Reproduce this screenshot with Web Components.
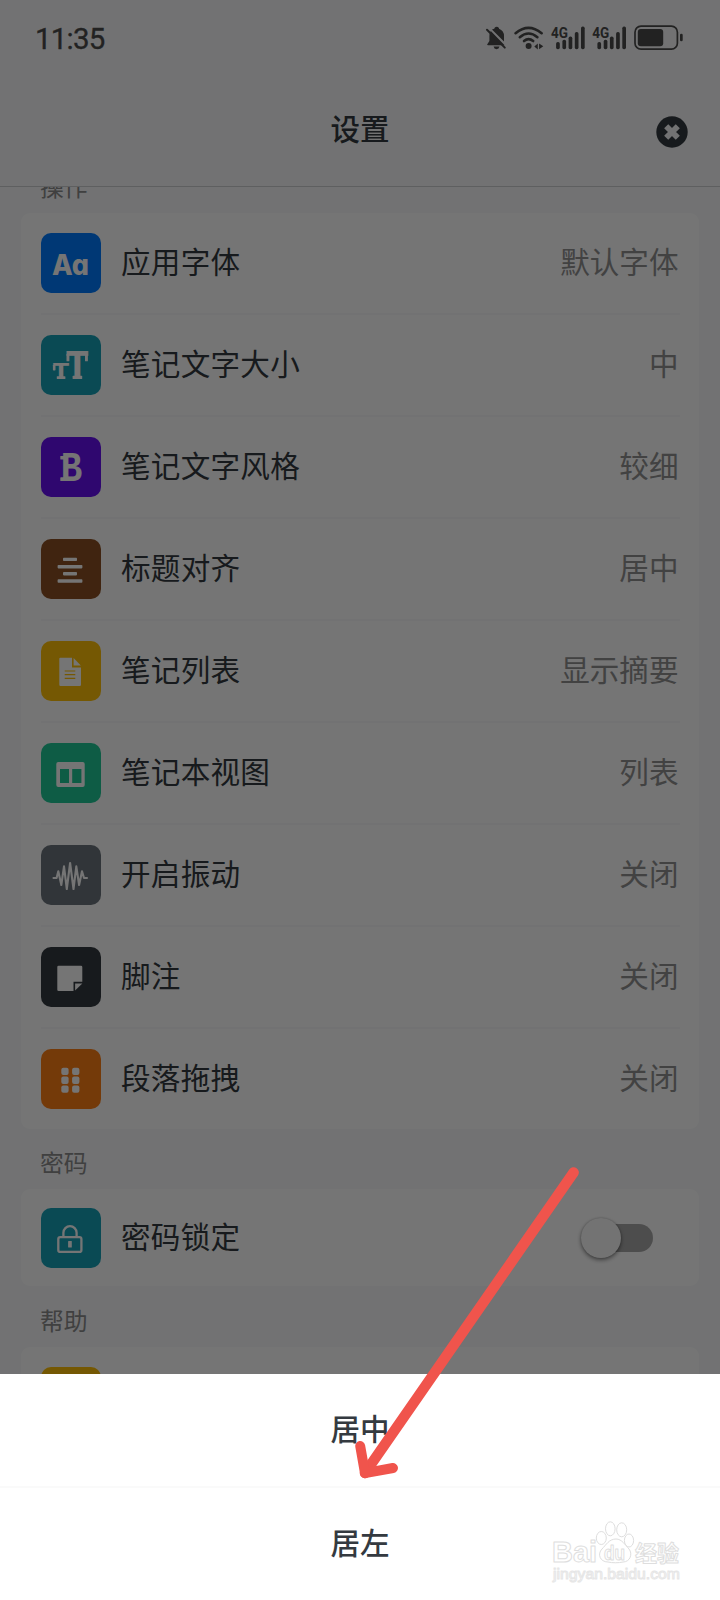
<!DOCTYPE html>
<html lang="zh-CN">
<head>
<meta charset="utf-8">
<title>设置</title>
<style>
html,body{margin:0;padding:0;background:#f8f9fa}
body{font-family:"Noto Sans CJK SC","Noto Sans",sans-serif}
</style>
</head>
<body>
<settings-screen></settings-screen>
<script>
const ICONS = {
  font: '<text x="29.4" y="42" text-anchor="middle" font-family="Inter,sans-serif" font-weight="800" font-size="28" textLength="37" lengthAdjust="spacingAndGlyphs" style="font-feature-settings:\'cv11\' 1,\'ss03\' 1">Aa</text>',
  size: '<g font-family="Liberation Mono,monospace" font-weight="700"><text x="11.3" y="43.8" font-size="23" textLength="17.5" lengthAdjust="spacingAndGlyphs">T</text><text x="24.3" y="44" font-size="42" textLength="24" lengthAdjust="spacingAndGlyphs">T</text></g><rect x="15.8" y="41.2" width="8.6" height="2.8" rx=".6"/><rect x="11.9" y="30" width="2.6" height="5.4" rx=".6"/><rect x="31.6" y="40.8" width="9.6" height="3.2" rx=".6"/><rect x="25.5" y="18.9" width="2.9" height="7.4" rx=".6"/><rect x="44" y="18.9" width="2.9" height="7.4" rx=".6"/>',
  bold: '<text x="19.7" y="44" font-family="Liberation Mono,monospace" font-weight="700" font-size="42" textLength="21.5" lengthAdjust="spacingAndGlyphs">B</text><rect x="19.3" y="18.9" width="5" height="3.7" rx=".6"/><rect x="19.3" y="40.3" width="5" height="3.7" rx=".6"/>',
  align: '<rect x="22" y="18.8" width="14" height="3.3" rx=".8"/><rect x="16.6" y="26" width="24.8" height="3.4" rx=".8"/><rect x="22" y="33" width="14" height="3.4" rx=".8"/><rect x="16.6" y="40.2" width="24.8" height="3.6" rx=".8"/>',
  file: '<path fill-rule="evenodd" d="M19.3 16.7H31V26.5H40V43.8Q40 45 38.8 45H19.5Q18.3 45 18.3 43.8V17.7Q18.3 16.7 19.3 16.7ZM23.7 29.4V30.6H34.3V29.4ZM23.7 33.1V34.3H34.3V33.1ZM23.7 36.8V38H34.3V36.8Z"/><path d="M32.6 16.9 39.8 24.6H32.6Z"/>',
  table: '<path fill-rule="evenodd" d="M17.3 19H41.7Q43.7 19 43.7 21V42Q43.7 44 41.7 44H17.3Q15.3 44 15.3 42V21Q15.3 19 17.3 19ZM19 26V40H28V26ZM31.2 26V40H40.4V26Z"/>',
  wave: '<path d="M12.5 33H15.6L17.3 26.3 20.3 40 23 21.4 25.8 44 29.1 18 32.5 44 35.3 21.4 38.1 40 41 26.3 43 33H46" fill="none" stroke="currentColor" stroke-width="2.1" stroke-linecap="round" stroke-linejoin="round"/>',
  note: '<path d="M17.6 18.7H40Q41.3 18.7 41.3 20V34.8H32.5V44H17.6Q16.3 44 16.3 42.7V20Q16.3 18.7 17.6 18.7Z"/><path d="M34.1 36.4H41.3L34.1 43.6Z"/>',
  grid: [18.7,27.6,36.4].map(y=>`<rect x="20.3" y="${y}" width="7.3" height="7.3" rx="2"/><rect x="31.1" y="${y}" width="7.3" height="7.3" rx="2"/>`).join(''),
  lock: '<g fill="none" stroke="currentColor" stroke-width="2.3"><rect x="17.3" y="29.1" width="23.1" height="14.8" rx="2"/><path d="M22.4 29V24.8A6.6 6.6 0 0 1 35.6 24.8V29"/></g><rect x="27.1" y="33" width="3.7" height="6.4" rx=".5"/>',
  none: ''
};

function define(name, html, setup) {
  const template = document.createElement('template');
  template.innerHTML = html;
  customElements.define(name, class extends HTMLElement {
    constructor() {
      super();
      this.attachShadow({mode: 'open'}).append(template.content.cloneNode(true));
    }
    connectedCallback() { if (setup) setup(this, this.shadowRoot); }
  });
}

define('status-bar', `
<style>
:host{display:flex;justify-content:space-between;align-items:flex-start;height:76px;box-sizing:border-box;padding:22px 36px 0 35px;color:#4a4a4a}
time{font:400 29.5px/34px Roboto,sans-serif;letter-spacing:-.8px;-webkit-text-stroke:.3px currentColor}
svg{display:block;fill:currentColor}
</style>
<time>11:35</time>
<svg width="200" height="30" viewBox="484 22 200 30">
  <path d="M487.3 44.2 489.4 41V36Q489.4 33.5 490.8 31L504.6 45.2H488.2Q486.6 45.2 487.3 44.2ZM492 29.6Q493.5 28.9 494.4 28.7V28Q496.7 25.6 499 28V28.7Q504 30.5 504 36V41.6ZM493.6 46.6H499.5Q499 49.2 496.5 49.2T493.6 46.6Z"/>
  <path d="M487 29.8 504.8 47.6" stroke="currentColor" stroke-width="2" stroke-linecap="round"/>
  <g fill="none" stroke="currentColor" stroke-width="2.6" stroke-linecap="round"><path d="M515.6 33.2Q528.5 22.4 541.6 33.2"/><path d="M519.8 37.2Q528.5 29.8 537.4 37.2"/><path d="M524 41Q528.5 37.2 533.2 41"/></g>
  <circle cx="528.6" cy="46" r="3"/>
  <path d="M534.3 46.6 537.8 43.4V49.4ZM539.1 43.4 543.3 46.3 539.1 49.2Z"/>
  <g><text x="551" y="37.6" font-family="Roboto,sans-serif" font-weight="700" font-size="15" textLength="17" lengthAdjust="spacingAndGlyphs">4G</text>
  <rect x="556.1" y="42" width="3.7" height="7.2" rx="1.7"/><rect x="562.4" y="39.7" width="3.7" height="9.5" rx="1.7"/><rect x="568.6" y="36.5" width="3.7" height="12.7" rx="1.7"/><rect x="574.8" y="32" width="3.7" height="17.2" rx="1.7"/><rect x="581" y="26.6" width="3.7" height="22.6" rx="1.7"/></g>
  <g transform="translate(41.3 0)"><text x="551" y="37.6" font-family="Roboto,sans-serif" font-weight="700" font-size="15" textLength="17" lengthAdjust="spacingAndGlyphs">4G</text>
  <rect x="556.1" y="42" width="3.7" height="7.2" rx="1.7"/><rect x="562.4" y="39.7" width="3.7" height="9.5" rx="1.7"/><rect x="568.6" y="36.5" width="3.7" height="12.7" rx="1.7"/><rect x="574.8" y="32" width="3.7" height="17.2" rx="1.7"/><rect x="581" y="26.6" width="3.7" height="22.6" rx="1.7"/></g>
  <rect x="635" y="26.2" width="42.4" height="23" rx="6" fill="none" stroke="currentColor" stroke-width="1.7"/>
  <rect x="637.8" y="29" width="25.4" height="17.2" rx="3"/><rect x="680" y="33.8" width="2.7" height="7.4" rx="1.3"/>
</svg>`);

define('title-bar', `
<style>
:host{display:grid;grid-template-columns:32px 1fr 32px;align-items:center;height:111px;box-sizing:border-box;padding:0 32px;border-bottom:1px solid #ced0d2;color:#343a40}
h1{grid-column:2;margin:0;font-size:29.5px;line-height:44px;font-weight:500;text-align:center;padding-bottom:9px}
svg{display:block;margin-top:1px}
</style>
<h1><slot></slot></h1>
<svg width="32" height="32" viewBox="0 0 32 32"><circle cx="16" cy="16" r="15.7" fill="#343a40"/><path d="M10.2 10.2 21.8 21.8M21.8 10.2 10.2 21.8" stroke="#f8f9fa" stroke-width="5.8"/></svg>`);

define('settings-group', `
<style>
:host{display:block}
h2{margin:0;padding:var(--drop,5px) 0 var(--lift,0px) 19px;box-sizing:border-box;height:var(--head,60px);display:flex;align-items:center;font-size:23.8px;line-height:34px;font-weight:400;color:#8c8c8c}
section{background:#fff;border-radius:9px;padding:0 19px 0 20px}
</style>
<h2></h2><section><slot></slot></section>`, (host, root) => {
  root.querySelector('h2').textContent = host.getAttribute('label');
});

define('settings-row', `
<style>
:host{display:flex;align-items:center;gap:20px;height:var(--row,102px);box-sizing:border-box;border-bottom:2px solid #f8f9fa}
:host(:last-child){border-bottom:0;height:calc(var(--row,102px) - 2px)}
.icon{width:60px;height:60px;border-radius:10px;flex:none;color:#fff}
.icon svg{display:block;fill:currentColor}
.name,.value{font-size:29.6px;line-height:44px;padding-bottom:4px;white-space:nowrap}
.name{flex:1;color:#343a40;letter-spacing:.25px}
.value{color:#919191;padding-right:1.5px}
</style>
<div class="icon"></div><div class="name"></div><div class="value"><slot></slot></div>`, (host, root) => {
  const icon = root.querySelector('.icon');
  icon.style.background = host.getAttribute('color');
  icon.innerHTML = `<svg width="60" height="60" viewBox="0 0 60 60">${ICONS[host.getAttribute('icon')]}</svg>`;
  root.querySelector('.name').textContent = host.getAttribute('name');
});

define('toggle-switch', `
<style>
:host{display:flex;align-items:center;width:72px;height:40px;margin-right:25.5px;padding-top:4px}
.track{margin-left:14px;width:58px;height:28px;border-radius:14px;background:#a9a9a9;display:flex;align-items:center}
.thumb{flex:none;width:40px;height:40px;margin-left:-14px;border-radius:50%;background:#fafafa;box-shadow:0 2px 4px rgba(0,0,0,.45),0 0 2px rgba(0,0,0,.2)}
</style>
<div class="track"><div class="thumb"></div></div>`);

define('action-sheet', `
<style>
:host{display:flex;flex-direction:column;background:#fff}
::slotted(div){flex:none;height:114px;box-sizing:border-box;display:flex;align-items:center;justify-content:center;padding-bottom:6px;font-size:29.5px;font-weight:500;color:#343a40;border-bottom:2px solid #fafafa}
::slotted(div:last-child){border-bottom:0;height:112px}
</style>
<slot></slot>`);

define('pointer-arrow', `
<style>:host{display:block}svg{display:block}</style>
<svg width="250" height="330" viewBox="340 1160 250 330" fill="none" stroke="#f0544c" stroke-linecap="round" stroke-linejoin="round"><path d="M573.6 1172.5 365 1473" stroke-width="10.5"/><path d="M360.2 1446 365 1473.2 393 1468" stroke-width="10"/></svg>`);

define('site-watermark', `
<style>:host{display:block}svg{display:block}</style>
<svg width="160" height="80" viewBox="540 1510 160 80" fill="#fff" stroke="#dedede" stroke-width="1" stroke-linejoin="round">
  <text x="552" y="1562" font-family="Liberation Sans,sans-serif" font-weight="700" font-size="29" textLength="45" lengthAdjust="spacingAndGlyphs">Bai</text>
  <ellipse cx="601.3" cy="1538" rx="5" ry="6.5"/><ellipse cx="610.3" cy="1528.8" rx="4.8" ry="7"/><ellipse cx="621.7" cy="1529.8" rx="5" ry="7"/><ellipse cx="629" cy="1540.5" rx="4.6" ry="6.5"/>
  <path d="M616 1539C622 1539 625 1545 629 1549C633 1554 630 1562 623 1562C619 1563 612 1563 608 1562C600 1562 597 1554 602 1549C606 1545 609 1539 616 1539Z"/>
  <text x="604" y="1560" font-family="Liberation Sans,sans-serif" font-weight="700" font-size="20" textLength="21" lengthAdjust="spacingAndGlyphs">du</text>
  <text x="635" y="1561" font-family="Noto Sans CJK SC,sans-serif" font-weight="700" font-size="22" textLength="44" lengthAdjust="spacingAndGlyphs">经验</text>
  <text x="553" y="1579" font-family="Liberation Sans,sans-serif" font-weight="400" font-size="15" stroke="#e6e6e6" stroke-width="1" textLength="127" lengthAdjust="spacingAndGlyphs">jingyan.baidu.com</text>
</svg>`);

define('settings-screen', `
<style>
:host{display:flex;flex-direction:column;position:relative;width:720px;height:1600px;overflow:hidden;background:#f8f9fa}
main{flex:1;min-height:0;overflow:hidden;padding:0 21px}
.scroll{margin-top:-26px}
.scrim{position:absolute;inset:0;background:rgba(0,0,0,.54)}
action-sheet{position:absolute;left:0;right:0;bottom:0;height:226px}
pointer-arrow{position:absolute;left:340px;top:1160px}
site-watermark{position:absolute;left:540px;top:1510px}
.one{--row:99px}
</style>
<status-bar></status-bar>
<title-bar>设置</title-bar>
<main><div class="scroll">
  <settings-group label="操作" style="--head:52px;--drop:0px;--lift:2px">
    <settings-row icon="font" color="#007bff" name="应用字体">默认字体</settings-row>
    <settings-row icon="size" color="#17a2b8" name="笔记文字大小">中</settings-row>
    <settings-row icon="bold" color="#6610f2" name="笔记文字风格">较细</settings-row>
    <settings-row icon="align" color="#8b5023" name="标题对齐">居中</settings-row>
    <settings-row icon="file" color="#ffc107" name="笔记列表">显示摘要</settings-row>
    <settings-row icon="table" color="#20c997" name="笔记本视图">列表</settings-row>
    <settings-row icon="wave" color="#6c757d" name="开启振动">关闭</settings-row>
    <settings-row icon="note" color="#343a40" name="脚注">关闭</settings-row>
    <settings-row icon="grid" color="#fd7e14" name="段落拖拽">关闭</settings-row>
  </settings-group>
  <settings-group class="one" label="密码" style="--head:60px">
    <settings-row icon="lock" color="#17a2b8" name="密码锁定"><toggle-switch></toggle-switch></settings-row>
  </settings-group>
  <settings-group label="帮助" style="--head:61px;--drop:7px">
    <settings-row icon="none" color="#ffc107" name=""></settings-row>
  </settings-group>
</div></main>
<div class="scrim"></div>
<action-sheet><div>居中</div><div>居左</div></action-sheet>
<pointer-arrow></pointer-arrow>
<site-watermark></site-watermark>`);
</script>
</body>
</html>
